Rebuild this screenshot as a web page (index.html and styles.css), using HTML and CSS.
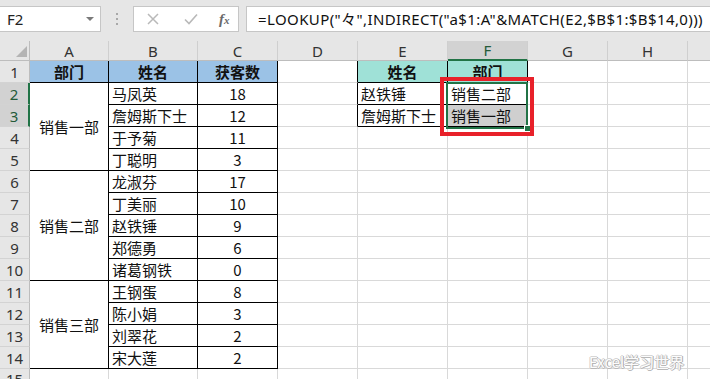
FILE: index.html
```html
<!DOCTYPE html>
<html lang="zh-CN">
<head>
<meta charset="utf-8">
<title>Excel</title>
<link rel="stylesheet" href="styles.css">
</head>
<body>
<div class="app">
  <div class="fbar">
    <div class="namebox"><span class="nb-text">F2</span><span class="nb-arrow"></span></div>
    <div class="dots"><i></i><i></i><i></i></div>
    <div class="btns">
      <svg class="ic" width="12" height="12" viewBox="0 0 12 12"><path d="M1 1L11 11M11 1L1 11" stroke="#b9b9b9" stroke-width="1.5" fill="none"/></svg>
      <svg class="ic" width="14" height="12" viewBox="0 0 14 12"><path d="M1 6.5L5 10.5L13 1.5" stroke="#b9b9b9" stroke-width="1.6" fill="none"/></svg>
      <span class="fx">f<small>x</small></span>
    </div>
    <div class="formula">=LOOKUP("々",INDIRECT("a$1:A"&amp;MATCH(E2,$B$1:$B$14,0)))</div>
  </div>
  <div class="sheet">
    <table class="grid">
      <colgroup>
        <col class="c-rh"><col class="c-a"><col class="c-b"><col class="c-c"><col class="c-d"><col class="c-e"><col class="c-f"><col class="c-g"><col class="c-h"><col class="c-i">
      </colgroup>
      <tr class="hdr">
        <th class="corner"><span class="tri"></span></th>
        <th>A</th><th>B</th><th>C</th><th>D</th><th>E</th><th class="hsel">F</th><th>G</th><th>H</th><th></th>
      </tr>
      <tr>
        <th class="rh">1</th>
        <td class="t blue b">部门</td><td class="t blue b">姓名</td><td class="t blue b">获客数</td><td class="bl"></td>
        <td class="t teal b">姓名</td><td class="t teal b">部门</td><td></td><td></td><td></td>
      </tr>
      <tr>
        <th class="rh rsel">2</th>
        <td class="t mid" rowspan="4">销售一部</td><td class="t name">马凤英</td><td class="t num">18</td><td class="bl"></td>
        <td class="t name">赵铁锤</td><td class="t name">销售二部</td><td></td><td></td><td></td>
      </tr>
      <tr>
        <th class="rh rsel">3</th>
        <td class="t name">詹姆斯下士</td><td class="t num">12</td><td class="bl"></td>
        <td class="t name">詹姆斯下士</td><td class="t name shade">销售一部</td><td></td><td></td><td></td>
      </tr>
      <tr>
        <th class="rh">4</th>
        <td class="t name">于予菊</td><td class="t num">11</td><td></td><td></td><td></td><td></td><td></td><td></td>
      </tr>
      <tr>
        <th class="rh">5</th>
        <td class="t name">丁聪明</td><td class="t num">3</td><td></td><td></td><td></td><td></td><td></td><td></td>
      </tr>
      <tr>
        <th class="rh">6</th>
        <td class="t mid" rowspan="5">销售二部</td><td class="t name">龙淑芬</td><td class="t num">17</td><td></td><td></td><td></td><td></td><td></td><td></td>
      </tr>
      <tr>
        <th class="rh">7</th>
        <td class="t name">丁美丽</td><td class="t num">10</td><td></td><td></td><td></td><td></td><td></td><td></td>
      </tr>
      <tr>
        <th class="rh">8</th>
        <td class="t name">赵铁锤</td><td class="t num">9</td><td></td><td></td><td></td><td></td><td></td><td></td>
      </tr>
      <tr>
        <th class="rh">9</th>
        <td class="t name">郑德勇</td><td class="t num">6</td><td></td><td></td><td></td><td></td><td></td><td></td>
      </tr>
      <tr>
        <th class="rh">10</th>
        <td class="t name">诸葛钢铁</td><td class="t num">0</td><td></td><td></td><td></td><td></td><td></td><td></td>
      </tr>
      <tr>
        <th class="rh">11</th>
        <td class="t mid" rowspan="4">销售三部</td><td class="t name">王钢蛋</td><td class="t num">8</td><td></td><td></td><td></td><td></td><td></td><td></td>
      </tr>
      <tr>
        <th class="rh">12</th>
        <td class="t name">陈小娟</td><td class="t num">3</td><td></td><td></td><td></td><td></td><td></td><td></td>
      </tr>
      <tr>
        <th class="rh">13</th>
        <td class="t name">刘翠花</td><td class="t num">2</td><td></td><td></td><td></td><td></td><td></td><td></td>
      </tr>
      <tr>
        <th class="rh">14</th>
        <td class="t name">宋大莲</td><td class="t num">2</td><td></td><td></td><td></td><td></td><td></td><td></td>
      </tr>
      <tr class="last">
        <th class="rh">15</th>
        <td></td><td></td><td></td><td></td><td></td><td></td><td></td><td></td><td></td>
      </tr>
    </table>
    <div class="selbox"><span class="handle"></span></div>
    <div class="redbox"></div>
    <div class="mark">Excel学习世界</div>
  </div>
</div>
</body>
</html>
```
FILE: styles.css
```css
* { box-sizing: border-box; }
html, body { margin: 0; padding: 0; }
body {
  width: 710px;
  height: 379px;
  overflow: hidden;
  background: #e6e6e6;
  font-family: "Noto Sans CJK SC", "Noto Sans", sans-serif;
}
.app { width: 710px; height: 379px; overflow: hidden; }

.fbar {
  height: 41px;
  display: flex;
  align-items: flex-start;
  padding-top: 6px;
  background: #e6e6e6;
  white-space: nowrap;
}
.fbar > * { flex-shrink: 0; }
.namebox {
  width: 101px;
  height: 26px;
  background: #fff;
  border: 1px solid #c6c6c6;
  border-left: none;
  display: flex;
  align-items: center;
  justify-content: space-between;
  padding: 0 6px 0 7px;
  font-family: "Noto Sans", sans-serif;
  font-size: 15px;
  color: #222;
}
.nb-arrow {
  width: 0; height: 0;
  border-left: 4px solid transparent;
  border-right: 4px solid transparent;
  border-top: 4px solid #7a7a7a;
}
.dots {
  width: 32px;
  height: 26px;
  display: flex;
  flex-direction: column;
  align-items: center;
  justify-content: center;
  gap: 3px;
}
.dots i { width: 2px; height: 2px; background: #a8a8a8; display: block; }
.btns {
  width: 106px;
  height: 26px;
  background: #fff;
  border: 1px solid #c6c6c6;
  display: flex;
  align-items: center;
  padding-left: 13px;
}
.btns .ic:first-child { margin-right: 25px; }
.btns .ic:nth-child(2) { margin-right: 21px; }
.fx {
  font-family: "Liberation Serif", serif;
  font-style: italic;
  font-size: 15px;
  color: #6a6a6a;
  font-weight: bold;
}
.fx small { font-size: 11px; }
.formula {
  margin-left: 7px;
  width: 470px;
  height: 26px;
  background: #fff;
  border: 1px solid #c6c6c6;
  border-right: none;
  padding-left: 11px;
  font-family: "Noto Sans", sans-serif;
  font-size: 15px;
  letter-spacing: 0.4px;
  line-height: 24px;
  color: #111;
  overflow: hidden;
}

.sheet { position: relative; }
.grid {
  border-collapse: separate;
  border-spacing: 0;
  table-layout: fixed;
  width: 720px;
  background: #fff;
}
.c-rh { width: 30px; }
.c-a { width: 79px; }
.c-b { width: 89px; }
.c-c { width: 80px; }
.c-d { width: 80px; }
.c-e { width: 90px; }
.c-f { width: 80px; }
.c-g { width: 80px; }
.c-h { width: 80px; }
.c-i { width: 32px; }

.grid td, .grid th {
  padding: 0;
  height: 22px;
  border-right: 1px solid #d9d9d9;
  border-bottom: 1px solid #d9d9d9;
  font-size: 15px;
  line-height: 20px;
  color: #111;
  font-weight: normal;
  white-space: nowrap;
  overflow: hidden;
}
.grid .hdr th {
  height: 20px;
  line-height: 18px;
  background: #e6e6e6;
  border-right-color: #cfcfcf;
  border-bottom-color: #bdbdbd;
  font-family: "Noto Sans", sans-serif;
  color: #333;
  text-align: center;
  vertical-align: middle;
}
.grid .hdr th.hsel {
  background: #d2d2d2;
  border-bottom: 2px solid #217346;
  color: #245b39;
}
.grid th.corner { position: relative; border-right-color: #bdbdbd; }
.tri {
  position: absolute;
  right: 2px;
  bottom: 3px;
  width: 0; height: 0;
  border-left: 11px solid transparent;
  border-bottom: 11px solid #b4b4b4;
}
.grid th.rh {
  background: #e6e6e6;
  border-right-color: #bdbdbd;
  border-bottom-color: #d3d3d3;
  font-family: "Noto Sans", sans-serif;
  color: #333;
  text-align: center;
}
.grid .last th.rh { vertical-align: top; }
.grid th.rsel {
  background: #d2d2d2;
  border-right: 2px solid #217346;
  color: #245b39;
}

.grid td.t { border-right-color: #000; border-bottom-color: #000; }
.grid td.bl { border-right-color: #000; }
.grid td.blue { background: #9bc2e6; }
.grid td.teal { background: #9fe1d7; }
.grid td.b { font-weight: bold; text-align: center; }
.grid td.name { padding-left: 3px; text-align: left; }
.grid td.num { text-align: center; }
.grid td.mid { text-align: center; vertical-align: middle; }
.grid td.shade { background: #cfcfcf; }

.selbox {
  position: absolute;
  left: 446px;
  top: 41px;
  width: 82px;
  height: 47px;
  border: 2px solid #217346;
  pointer-events: none;
}
.handle {
  position: absolute;
  right: -5px;
  bottom: -5px;
  width: 7px;
  height: 7px;
  background: #217346;
  border: 1px solid #fff;
}
.redbox {
  position: absolute;
  left: 440px;
  top: 36px;
  width: 94px;
  height: 59px;
  border: 4px solid #e8212a;
}
.mark {
  position: absolute;
  left: 589px;
  top: 312px;
  font-family: "Noto Sans CJK SC", sans-serif;
  font-size: 15px;
  line-height: 18px;
  color: #fcfcfc;
  text-shadow: 1px 0 0 #a8a8a8, -1px 0 0 #d0d0d0, 0 1px 0 #b8b8b8, 0 -1px 0 #d6d6d6;
}
```
